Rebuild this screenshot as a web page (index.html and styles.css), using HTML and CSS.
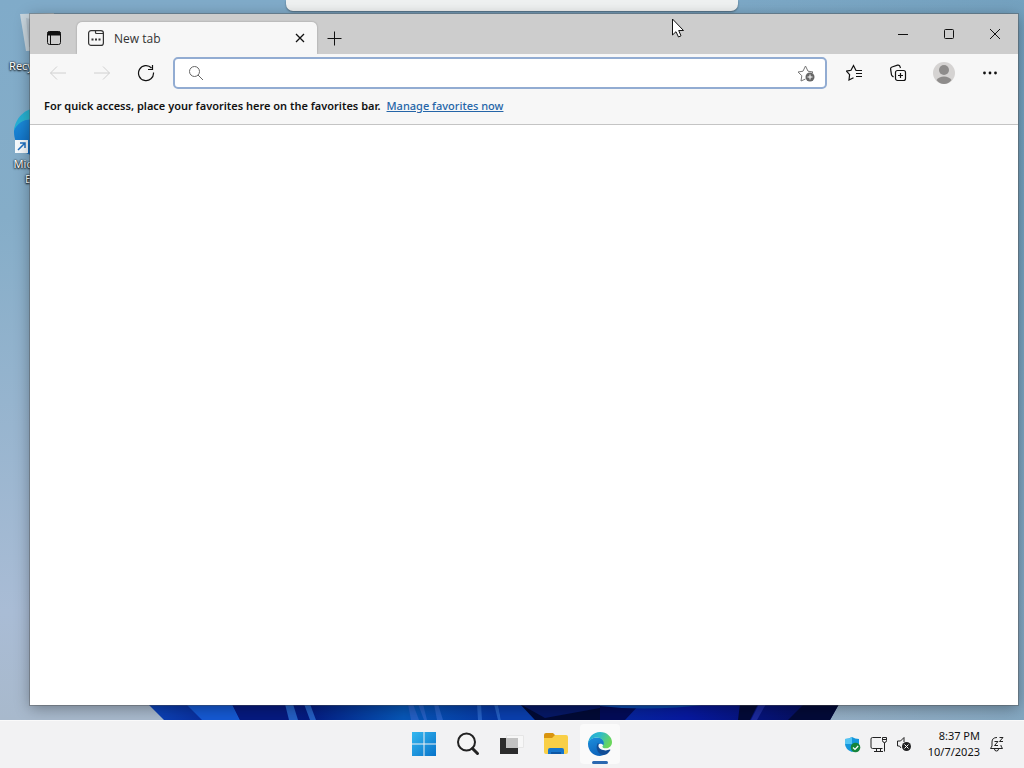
FILE: index.html
```html
<!DOCTYPE html>
<html lang="en">
<head>
  <meta charset="UTF-8">
  <title>Desktop</title>
  <link rel="stylesheet" href="styles.css">
</head>
<body>

  <!-- Shared Edge logo -->
  <svg class="symbols" aria-hidden="true">
    <defs>
      <linearGradient id="edgeTop" x1="0" y1="0" x2="1" y2="0.4">
        <stop offset="0" stop-color="#1fa5dd"></stop>
        <stop offset="0.5" stop-color="#2fbcc8"></stop>
        <stop offset="1" stop-color="#6ad65c"></stop>
      </linearGradient>
      <linearGradient id="edgeLeft" x1="0" y1="0" x2="0.4" y2="1">
        <stop offset="0" stop-color="#1d8fdd"></stop>
        <stop offset="1" stop-color="#0d64bb"></stop>
      </linearGradient>
    </defs>
    <symbol id="edge" viewBox="0 0 24 24">
      <path fill="url(#edgeLeft)" d="M0 11C1 7 5 5.500 9 5.500c5 0 7.500 2.500 7.500 5.500 0 1-.5 2-1.200 2.700C14.500 11 9 11 9 15c0 4 4 7 10 6a12 12 0 0 1-7 3C5 24 0 18.500 0 12z"></path>
      <path fill="#114d96" d="M9.500 11.500C6.500 18 12 24 17 22.800c2-.7 4-2.300 5.300-4.600.3-.5-.1-.8-.6-.6-4.500 1.900-10.500.1-11.200-3.100-.2-1.200 0-2.200.6-3.100z"></path>
      <path fill="url(#edgeTop)" d="M0 11.500C.5 5 5.500 0 12 0c7 0 12 5 12 10 0 4-3 6.300-6 6.300-2.500 0-4.300-.9-3.300-2.300 3-3.500-.5-8.500-5.700-8.500C4.500 5.500 1.200 8 0 11.500z"></path>
    </symbol>
  </svg>

  <main class="desktop">
    <svg class="bloom" viewBox="0 0 1024 16" preserveAspectRatio="none" aria-hidden="true">
      <defs>
        <linearGradient id="petals" x1="0" x2="1">
          <stop offset="0" stop-color="#0d45ba"></stop>
          <stop offset="0.12" stop-color="#07238f"></stop>
          <stop offset="0.23" stop-color="#041a80"></stop>
          <stop offset="0.37" stop-color="#0757b8"></stop>
          <stop offset="0.5" stop-color="#0638a4"></stop>
          <stop offset="0.58" stop-color="#06339d"></stop>
          <stop offset="0.78" stop-color="#0719a0"></stop>
          <stop offset="1" stop-color="#050d50"></stop>
        </linearGradient>
      </defs>
      <path fill="url(#petals)" d="M148 0H839L830 16H164z"></path>
      <path fill="#1559d3" d="M186 0H232L240 16H202z"></path>
      <path fill="#061a80" d="M232 0H285L288 16H240z"></path>
      <path fill="#245fc4" d="M285 0H293L298 16H289zM304 0H310L316 16H310zM408 0H413L419 16H411zM418 0H423L427 16H424zM434 0H438L443 16H437zM477 0H481L482 16H478zM494 0H498L501 16H498z"></path>
      <path fill="#0a3fae" d="M498 0H520L535 16H501z"></path>
      <path fill="#020a36" d="M520 0H600V16H535z"></path>
      <path fill="#061866" d="M520 0H600V4L545 14z"></path>
      <path fill="#030b58" d="M600 0H640L625 16H600z"></path>
      <path fill="#0b49ae" d="M600 0H710Q650 8 600 2z"></path>
      <path fill="#030a38" d="M740 0H758L750 16H738zM804 0H839L830 16H788z"></path>
      <path fill="#1c2a9c" d="M759 0H766L757 16H751z"></path>
    </svg>

    <ul class="shortcuts">
      <li>
        <svg class="shortcut-icon" viewBox="0 0 48 48" aria-hidden="true">
          <path fill="#c9d6de" d="M6 4l34-1-6 37-22 1z"></path>
          <path fill="#b4c2cd" d="M12 8l10 2-2 26-5 1z"></path>
        </svg>
        <span class="one-line">Recycle Bin</span>
      </li>
      <li>
        <svg class="shortcut-icon" viewBox="0 0 48 48" aria-hidden="true">
          <use href="#edge" width="48" height="48"></use>
          <path fill="#f6fafd" d="M1 32h13v13H1z"></path>
          <path fill="none" stroke="#1e6fc0" stroke-width="1.500" d="M4 42l7-7M6 35h5v5"></path>
        </svg>
        <span>Microsoft Edge</span>
      </li>
    </ul>

    <div class="connection-bar"></div>

    <section class="window">
      <header class="titlebar">
        <button class="tab-actions" aria-label="Tab actions">
          <svg width="16" height="16" viewBox="0 0 16 16" fill="none" stroke="#111">
            <rect x="1.500" y="1.500" width="13" height="13" rx="2"></rect>
            <path fill="#111" d="M2 2h12v3H2z"></path>
            <path d="M4.500 5v9"></path>
          </svg>
        </button>
        <div class="tab">
          <svg width="16" height="16" viewBox="0 0 16 16" fill="none" stroke="#333" stroke-width="1.200">
            <rect x=".6" y=".6" width="14.800" height="14.800" rx="2.500"></rect>
            <path d="M7.500.5v2q0 1 1 1h7"></path>
            <path fill="#333" stroke="none" d="M3.500 8.500h2v2h-2zM7 8.500h2v2H7zM10.500 8.500h2v2h-2z"></path>
          </svg>
          <span class="tab-title">New tab</span>
          <button class="tab-close" aria-label="Close tab">
            <svg width="10" height="10" viewBox="0 0 10 10" stroke="#111" stroke-width="1.300"><path d="M1 1l8 8M9 1L1 9"></path></svg>
          </button>
        </div>
        <button class="new-tab" aria-label="New tab">
          <svg width="15" height="15" viewBox="0 0 15 15" stroke="#111"><path d="M.5 7.500h14M7.500.5v14"></path></svg>
        </button>
        <div class="window-controls">
          <button aria-label="Minimize">
            <svg width="10" height="10" viewBox="0 0 10 10" stroke="#111"><path d="M0 5.500h10"></path></svg>
          </button>
          <button aria-label="Maximize">
            <svg width="10" height="10" viewBox="0 0 10 10" fill="none" stroke="#111"><rect x=".5" y=".5" width="9" height="9" rx="1"></rect></svg>
          </button>
          <button aria-label="Close">
            <svg width="10" height="10" viewBox="0 0 10 10" stroke="#111"><path d="M0 0l10 10M10 0L0 10"></path></svg>
          </button>
        </div>
      </header>

      <div class="toolbar">
        <button aria-label="Back" disabled>
          <svg width="18" height="16" viewBox="0 0 18 16" fill="none" stroke="#d0d0d0"><path d="M17 8H1.500M8 1.500L1.500 8 8 14.500"></path></svg>
        </button>
        <button aria-label="Forward" disabled>
          <svg width="18" height="16" viewBox="0 0 18 16" fill="none" stroke="#d0d0d0"><path d="M1 8h15.500M10 1.500L16.500 8 10 14.500"></path></svg>
        </button>
        <button aria-label="Refresh">
          <svg width="18" height="18" viewBox="0 0 18 18" fill="none" stroke="#111" stroke-width="1.200"><path d="M16.500 8.500A7.500 7.500 0 1 1 14.500 4M15.500 1v4.500H11"></path></svg>
        </button>
        <div class="address-bar">
          <svg width="16" height="16" viewBox="0 0 16 16" fill="none" stroke="#666"><circle cx="6.500" cy="6.500" r="5"></circle><path d="M10 10l5 5"></path></svg>
          <input type="text" aria-label="Search or enter web address">
          <button class="add-favorite" aria-label="Add this page to favorites">
            <svg width="18" height="18" viewBox="0 0 18 18" fill="none" stroke="#777">
              <path d="M8.500 15L4 17l.8-5.300L1 8l5-.8L8.500 2 11 7.200l5 .8-2 2"></path>
              <circle cx="13" cy="13" r="4.500" fill="#666" stroke="none"></circle>
              <path stroke="#fff" d="M10.500 13h5M13 10.500v5"></path>
            </svg>
          </button>
        </div>
        <button aria-label="Favorites">
          <svg width="18" height="18" viewBox="0 0 18 18" fill="none" stroke="#111" stroke-width="1.200">
            <path d="M16 6.500h-6L7.500 1.500 5 6.300l-4.500.8 3.100 3.600L3 16l4.500-2.300"></path>
            <path d="M10 9.500h6M10 12.500h6"></path>
          </svg>
        </button>
        <button aria-label="Collections">
          <svg width="18" height="18" viewBox="0 0 18 18" fill="none" stroke="#111" stroke-width="1.200">
            <rect x="5.500" y="6.500" width="10" height="10" rx="2"></rect>
            <path d="M10.500 9v5M8 11.500h5M3.500 13l-1.200-1Q1.700 11.500 1.500 10.800L.6 5.200Q.4 3.500 2 3L7.500 1.200Q9.500.8 10 2.500l.5 1.500"></path>
          </svg>
        </button>
        <button class="wide" aria-label="Profile">
          <svg width="22" height="22" viewBox="0 0 22 22">
            <circle cx="11" cy="11" r="11" fill="#d5d3d2"></circle>
            <circle cx="11" cy="8" r="5" fill="#8e8c8b"></circle>
            <path fill="#8e8c8b" d="M3.500 18Q6 14.500 11 14.500T18.500 18Q15.500 22 11 22T3.500 18z"></path>
          </svg>
        </button>
        <button class="wide" aria-label="Settings and more">
          <svg width="14" height="4" viewBox="0 0 14 4" fill="#111"><circle cx="1.500" cy="2" r="1.400"></circle><circle cx="7" cy="2" r="1.400"></circle><circle cx="12.500" cy="2" r="1.400"></circle></svg>
        </button>
      </div>

      <div class="favorites-bar">
        <span>For quick access, place your favorites here on the favorites bar.</span>
        <a href="#">Manage favorites now</a>
      </div>

      <div class="page"></div>
    </section>

    <svg class="cursor" width="14" height="20" viewBox="0 0 14 20" aria-hidden="true">
      <path fill="#fff" stroke="#111" d="M.5 1v16L4 13.700 6.500 19 9 17.800 6.700 12.500h4.800z"></path>
    </svg>
  </main>

  <footer class="taskbar">
    <nav class="apps">
      <button aria-label="Start">
        <svg width="24" height="24" viewBox="0 0 24 24">
          <defs>
            <linearGradient id="start" x2="1" y2="1">
              <stop offset="0" stop-color="#35b8f0"></stop>
              <stop offset="1" stop-color="#0873c9"></stop>
            </linearGradient>
          </defs>
          <path fill="url(#start)" d="M0 0h11.500v11.500H0zM12.500 0H24v11.500H12.500zM0 12.500h11.500V24H0zM12.500 12.500H24V24H12.500z"></path>
        </svg>
      </button>
      <button aria-label="Search">
        <svg width="24" height="24" viewBox="0 0 24 24" fill="none" stroke="#222">
          <circle cx="10.500" cy="10" r="8.500" fill="#f5f5f5" stroke-width="2"></circle>
          <path stroke-width="3" stroke-linecap="round" d="M16.500 16.500l5 5"></path>
        </svg>
      </button>
      <button aria-label="Task view">
        <svg width="24" height="24" viewBox="0 0 24 24">
          <path fill="#2c2c2c" d="M0 6h18v16H0z"></path>
          <path fill="#f7f7f7" stroke="#e6e6e6" d="M6.500 3.500h17v12h-17z"></path>
          <path fill="#c2c2c2" d="M6 6h12v10H6z"></path>
        </svg>
      </button>
      <button aria-label="File Explorer">
        <svg width="24" height="24" viewBox="0 0 24 24">
          <path fill="#d9940f" d="M0 3q0-2 2-2h7l3 3v4H0z"></path>
          <path fill="#f9cf46" d="M0 6h8l3-3h11q2 0 2 2v15q0 2-2 2H2q-2 0-2-2z"></path>
          <path fill="#1675cb" d="M4 22v-4q0-2 2-2h12q2 0 2 2v4z"></path>
          <path fill="#0d57a4" d="M7 20h10v2H7z"></path>
        </svg>
      </button>
      <button class="active" aria-label="Microsoft Edge">
        <svg width="24" height="24"><use href="#edge" width="24" height="24"></use></svg>
      </button>
    </nav>

    <div class="tray">
      <button aria-label="Windows Security">
        <svg width="17" height="17" viewBox="0 0 17 17">
          <path fill="#1597dc" d="M8 1q3 2 7 2v5q0 5-7 8-7-3-7-8V3q4 0 7-2z"></path>
          <path fill="#55c5f3" d="M8 1v7H1V3q4 0 7-2z"></path>
          <circle cx="11.500" cy="11.500" r="4.800" fill="#16853b"></circle>
          <path fill="none" stroke="#fff" stroke-width="1.200" d="M9 11.500l2 2 3.200-3.500"></path>
        </svg>
      </button>
      <button aria-label="Network">
        <svg width="17" height="17" viewBox="0 0 17 17" fill="none" stroke="#222">
          <path d="M11 1.500H2.500q-1.500 0-1.500 1.500v8q0 1.500 1.500 1.500h10M4 15.500h9M6.500 12.500v3M10.500 12.500v3M14.500 6.500v9M12.500 1.500h4v3q0 2-2 2t-2-2zM12.500 3.500h4"></path>
        </svg>
      </button>
      <button aria-label="Volume muted">
        <svg width="16" height="16" viewBox="0 0 16 16" fill="none" stroke="#222">
          <path d="M8 6V1.500L4.500 5H1.500v5h2l1.500 2"></path>
          <circle cx="10.500" cy="10.500" r="4.500" fill="#222" stroke="none"></circle>
          <path stroke="#fff" d="M8.500 8.500l4 4M12.500 8.500l-4 4"></path>
        </svg>
      </button>
      <div class="clock">
        <time>8:37 PM</time>
        <time>10/7/2023</time>
      </div>
      <button aria-label="Notifications">
        <svg width="15" height="16" viewBox="0 0 15 16" fill="none" stroke="#222">
          <path d="M8 1.500Q3 1.500 3 6v4l-1.500 2.500h12L12 10V9M5.500 13q0 2 2 2t2-2M5.500 5.500h3.500l-3.500 4h3.500M10.500 1.500h3.500l-3.500 4h3.500"></path>
        </svg>
      </button>
    </div>
  </footer>

</body>
</html>
```
FILE: styles.css
```css
* {
  box-sizing: border-box;
}

body {
  display: flex;
  flex-direction: column;
  height: 100vh;
  margin: 0;
  overflow: hidden;
  font-family: 'Noto Sans', 'Open Sans', sans-serif;
  font-size: 11px;
  color: #111;
}

button {
  display: flex;
  align-items: center;
  justify-content: center;
  padding: 0;
  border: 0;
  background: none;
}

.symbols {
  position: absolute;
  width: 0;
  height: 0;
}

.desktop {
  position: relative;
  flex: 1;
  overflow: hidden;
  background: linear-gradient(#80abc9, #85adc8 30%, #a9bcd5 85%, #a8b9cc);
}

/* right side of the wallpaper is darker */
.desktop::before {
  content: "";
  position: absolute;
  inset: 0;
  background: linear-gradient(to right, transparent 60%, #6c9bb999);
}

.bloom {
  position: absolute;
  left: 0;
  bottom: 0;
  width: 100%;
  height: 16px;
}

.shortcuts {
  position: relative;
  width: 76px;
  margin: 0;
  padding: 10px 0 0;
  list-style: none;
}

.shortcuts li {
  display: flex;
  flex-direction: column;
  align-items: center;
  height: 98px;
  padding: 0 8px;
  line-height: 15px;
  text-align: center;
  color: white;
  text-shadow: 0 1px 2px black, 0 0 2px black;
}

.shortcut-icon {
  width: 48px;
  height: 48px;
}

.one-line {
  white-space: nowrap;
}

.connection-bar {
  position: absolute;
  top: 0;
  left: 50%;
  width: 452px;
  height: 11px;
  margin-left: -226px;
  background: #eff1f1;
  border-radius: 0 0 7px 7px;
  box-shadow: 0 1px 2px rgba(0,0,0,0.4);
}

.window {
  position: absolute;
  top: 14px;
  right: 6px;
  bottom: 15px;
  left: 30px;
  display: flex;
  flex-direction: column;
  background: white;
  box-shadow: 0 0 0 1px rgba(80,80,80,0.4), 0 3px 14px rgba(0,0,0,0.35);
}

.titlebar {
  display: flex;
  align-items: flex-end;
  height: 40px;
  background: #cdcdcd;
}

.tab-actions {
  width: 47px;
  height: 32px;
}

.tab {
  display: flex;
  align-items: center;
  width: 240px;
  height: 32px;
  padding: 0 10px 0 11px;
  background: #f7f7f7;
  border-radius: 5px 5px 0 0;
  box-shadow: 0 0 2px rgba(0,0,0,0.3);
}

.tab-title {
  flex: 1;
  margin-left: 10px;
  font-family: 'Open Sans', sans-serif;
  font-size: 12px;
  color: #333;
}

.tab-close {
  width: 14px;
  height: 14px;
}

.new-tab {
  width: 35px;
  height: 32px;
}

.window-controls {
  display: flex;
  align-self: flex-start;
  margin-left: auto;
}

.window-controls button {
  width: 46px;
  height: 40px;
}

.toolbar {
  position: relative;
  display: flex;
  align-items: center;
  height: 38px;
  padding: 0 5px 0 6px;
  background: #f7f7f7;
}

.toolbar > button {
  width: 44px;
  height: 32px;
}

.toolbar > .wide {
  width: 46px;
}

.address-bar {
  display: flex;
  flex: 1;
  align-items: center;
  height: 32px;
  margin: 0 6px 0 5px;
  padding: 0 10px 0 13px;
  background: white;
  border: 2px solid #92acd2;
  border-radius: 5px;
}

.address-bar input {
  flex: 1;
  min-width: 0;
  border: 0;
  outline: none;
  font: inherit;
}

.favorites-bar {
  display: flex;
  gap: 6px;
  height: 33px;
  padding: 5px 14px 0;
  line-height: 18px;
  font-weight: 600;
  background: #f7f7f7;
  border-bottom: 1px solid #c4c4c4;
}

.favorites-bar a {
  font-weight: 500;
  color: #2565a8;
}

.page {
  flex: 1;
}

.cursor {
  position: absolute;
  top: 18px;
  left: 672px;
}

.taskbar {
  display: grid;
  grid-template-columns: 1fr auto 1fr;
  align-items: center;
  height: 48px;
  background: #f2f2f3;
  box-shadow: inset 0 1px #fafafa;
}

.apps {
  grid-column: 2;
  display: flex;
  gap: 4px;
}

.apps button {
  position: relative;
  width: 40px;
  height: 40px;
}

.apps .active {
  background: #fafafa;
  border-radius: 4px;
}

.apps .active::after {
  content: "";
  position: absolute;
  bottom: 0;
  left: 12px;
  width: 16px;
  height: 3px;
  background: #2968b0;
  border-radius: 2px;
}

.tray {
  display: flex;
  align-items: center;
  justify-content: flex-end;
  gap: 9px;
  padding-right: 20px;
}

.clock {
  display: flex;
  flex-direction: column;
  margin-left: 7px;
  line-height: 16px;
  text-align: right;
}
```
